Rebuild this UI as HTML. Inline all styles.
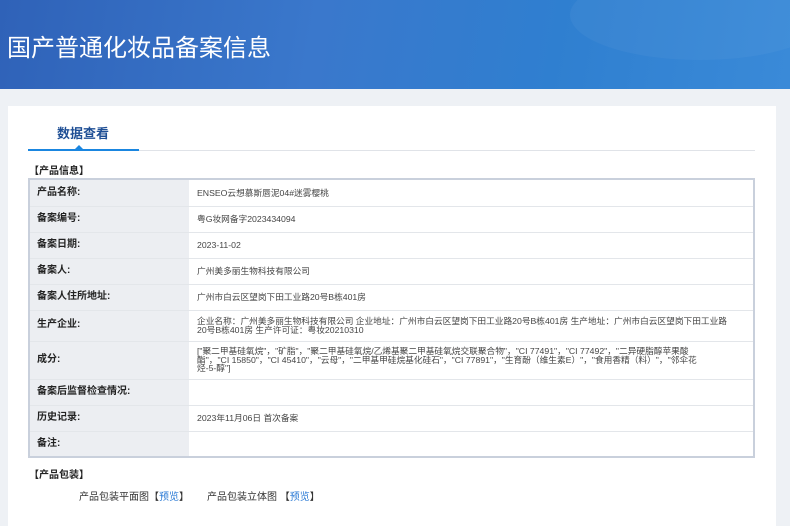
<!DOCTYPE html>
<html><head><meta charset="utf-8"><style>
*{margin:0;padding:0;box-sizing:border-box}
body{width:790px;height:505px;overflow:hidden;background:#eef1f5;font-family:"Liberation Sans","Noto Sans CJK SC",sans-serif;position:relative}
.hd{position:absolute;left:0;top:0;width:790px;height:89px;background:linear-gradient(100deg,#2f62b8 0%,#3a78cc 40%,#2f7fd0 70%,#3a8ad8 100%);overflow:hidden}
.hd .g{position:absolute;right:-40px;top:-30px;width:260px;height:90px;border-radius:50%;background:rgba(255,255,255,.04)}
.hd h1{position:absolute;left:7px;top:28px;color:#fff;font-weight:normal;font-size:24px;font-family:"Liberation Sans","Noto Sans CJK SC",sans-serif}
.pn{position:absolute;left:8px;top:106px;width:768px;height:420px;background:#fff}
.tab{position:absolute;left:49px;top:17px;font-size:13px;color:#1f4f95;font-weight:bold}
.ln{position:absolute;left:20px;top:44px;width:727px;height:1px;background:#e0e3e8}
.lb{position:absolute;left:20px;top:43px;width:111px;height:2px;background:#1a86e0}
.tri{position:absolute;left:67px;top:39px;width:0;height:0;border-left:4px solid transparent;border-right:4px solid transparent;border-bottom:4px solid #1a86e0}
.sec{position:absolute;font-size:10px;line-height:11px;font-weight:bold;color:#222}
table{position:absolute;left:20px;top:72px;width:727px;border-collapse:collapse;border:2px solid #c9d0dc;font-size:8.7px}
td{border-bottom:1px solid #e3e6ea;vertical-align:middle;color:#444;line-height:8.5px;white-space:nowrap}
td.l{width:160px;background:#eceef2;font-weight:bold;color:#222;padding-left:7px;font-size:10px}
td.v{padding-left:8px}
.pk{position:absolute;top:382px;font-size:10px;color:#333}
.pk span{color:#2a7ad5}
</style></head><body>
<div class="hd"><div class="g"></div><h1>国产普通化妆品备案信息</h1></div>
<div class="pn">
<div class="tab">数据查看</div>
<div class="ln"></div><div class="lb"></div><div class="tri"></div>
<div class="sec" style="left:21px;top:60px">【产品信息】</div>
<table>
<tr style="height:27px"><td class="l">产品名称:</td><td class="v">ENSEO云想慕斯唇泥04#迷雾樱桃</td></tr>
<tr style="height:26px"><td class="l">备案编号:</td><td class="v">粤G妆网备字2023434094</td></tr>
<tr style="height:26px"><td class="l">备案日期:</td><td class="v">2023-11-02</td></tr>
<tr style="height:26px"><td class="l">备案人:</td><td class="v">广州美多丽生物科技有限公司</td></tr>
<tr style="height:26px"><td class="l">备案人住所地址:</td><td class="v">广州市白云区望岗下田工业路20号B栋401房</td></tr>
<tr style="height:31px"><td class="l">生产企业:</td><td class="v">企业名称：广州美多丽生物科技有限公司 企业地址：广州市白云区望岗下田工业路20号B栋401房 生产地址：广州市白云区望岗下田工业路<br>20号B栋401房 生产许可证：粤妆20210310</td></tr>
<tr style="height:38px"><td class="l">成分:</td><td class="v">["聚二甲基硅氧烷"，"矿脂"，"聚二甲基硅氧烷/乙烯基聚二甲基硅氧烷交联聚合物"，"CI 77491"，"CI 77492"，"二异硬脂醇苹果酸<br>酯"，"CI 15850"，"CI 45410"，"云母"，"二甲基甲硅烷基化硅石"，"CI 77891"，"生育酚（维生素E）"，"食用香精（料）"，"邻伞花<br>烃-5-醇"]</td></tr>
<tr style="height:26px"><td class="l">备案后监督检查情况:</td><td class="v"></td></tr>
<tr style="height:26px"><td class="l">历史记录:</td><td class="v">2023年11月06日 首次备案</td></tr>
<tr style="height:26px"><td class="l">备注:</td><td class="v"></td></tr>
</table>
<div class="sec" style="left:21px;top:364px">【产品包装】</div>
<div class="pk" style="left:71px">产品包装平面图【<span>预览</span>】</div>
<div class="pk" style="left:199px">产品包装立体图 【<span>预览</span>】</div>
</div>
</body></html>
